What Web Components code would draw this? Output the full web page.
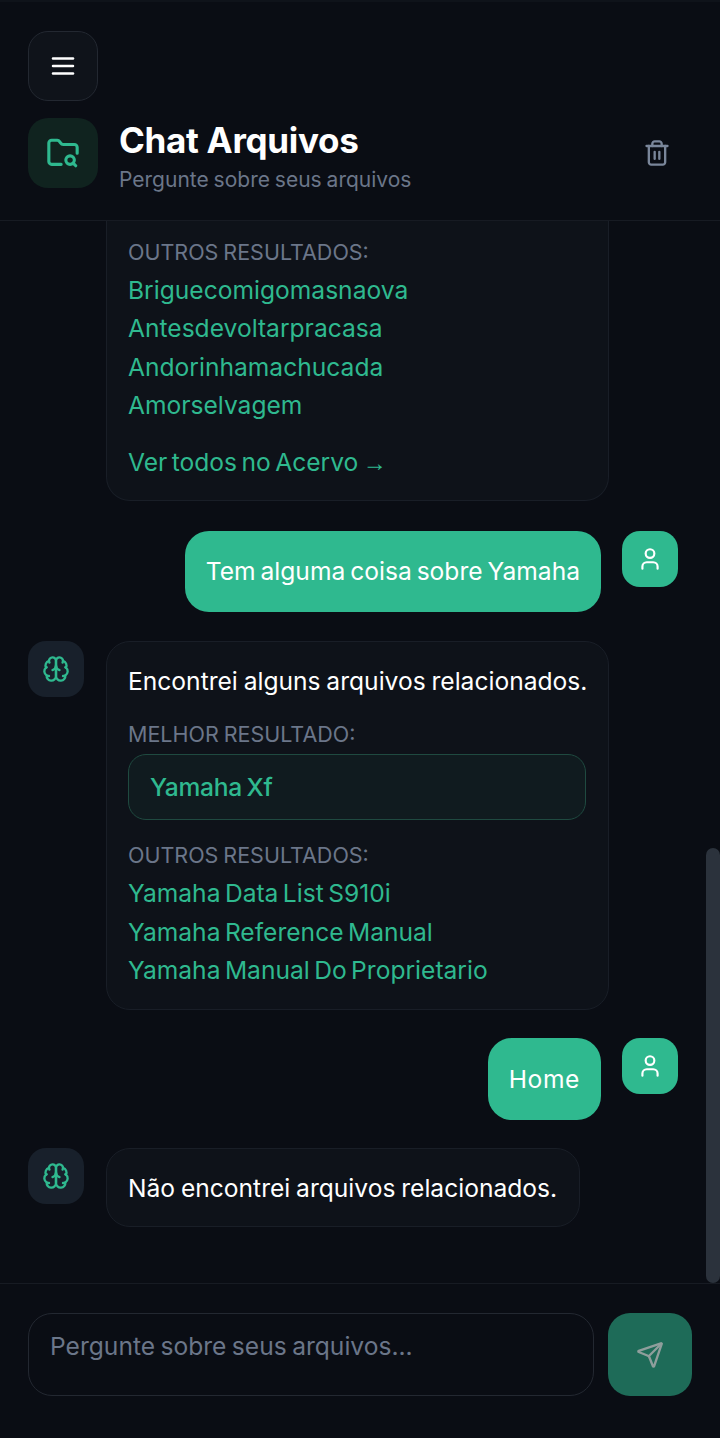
<!DOCTYPE html>
<html lang="pt-BR">
<head>
<meta charset="utf-8">
<title>Chat Arquivos</title>
<style>
  html, body { margin: 0; padding: 0; height: 100%; background: #0a0d14; }
  body { font-family: Inter, "Noto Sans", sans-serif; color: #fff; }
</style>
</head>
<body>
<chat-app>
  <app-header slot="header"></app-header>
  <chat-message role="bot" slot="messages" tall>
    <result-label>OUTROS RESULTADOS:</result-label>
    <result-link>Briguecomigomasnaova</result-link>
    <result-link>Antesdevoltarpracasa</result-link>
    <result-link>Andorinhamachucada</result-link>
    <result-link>Amorselvagem</result-link>
    <result-link more>Ver todos no Acervo <span style="font-family: 'Liberation Sans', sans-serif; font-size: 24px">→</span></result-link>
  </chat-message>
  <chat-message role="user" slot="messages">Tem alguma coisa sobre Yamaha</chat-message>
  <chat-message role="bot" slot="messages" wide>
    Encontrei alguns arquivos relacionados.
    <result-label gap>MELHOR RESULTADO:</result-label>
    <best-result>Yamaha Xf</best-result>
    <result-label>OUTROS RESULTADOS:</result-label>
    <result-link>Yamaha Data List S910i</result-link>
    <result-link>Yamaha Reference Manual</result-link>
    <result-link>Yamaha Manual Do Proprietario</result-link>
  </chat-message>
  <chat-message role="user" slot="messages" style="letter-spacing: 0.6px">Home</chat-message>
  <chat-message role="bot" slot="messages">Não encontrei arquivos relacionados.</chat-message>
  <chat-composer slot="footer"></chat-composer>
</chat-app>

<script>
const ICONS = {
  menu: '<path d="M4 6h16"/><path d="M4 12h16"/><path d="M4 18h16"/>',
  folder: '<path d="M10.7 20H4a2 2 0 0 1-2-2V5a2 2 0 0 1 2-2h3.9a2 2 0 0 1 1.69.9l.81 1.2a2 2 0 0 0 1.67.9H20a2 2 0 0 1 2 2v4.1"/><path d="m21 21-1.9-1.9"/><circle cx="17" cy="17" r="3"/>',
  trash: '<path d="M3 6h18"/><path d="M19 6v14c0 1-1 2-2 2H7c-1 0-2-1-2-2V6"/><path d="M8 6V4c0-1 1-2 2-2h4c1 0 2 1 2 2v2"/><path d="M10 11v6"/><path d="M14 11v6"/>',
  user: '<path d="M19 21v-2a4 4 0 0 0-4-4H9a4 4 0 0 0-4 4v2"/><circle cx="12" cy="7" r="4"/>',
  brain: '<path d="M12 5a3 3 0 1 0-5.997.125 4 4 0 0 0-2.526 5.77 4 4 0 0 0 .556 6.588A4 4 0 1 0 12 18Z"/><path d="M12 5a3 3 0 1 1 5.997.125 4 4 0 0 1 2.526 5.77 4 4 0 0 1-.556 6.588A4 4 0 1 1 12 18Z"/><path d="M15 13a4.5 4.5 0 0 1-3-4 4.5 4.5 0 0 1-3 4"/><path d="M17.599 6.5a3 3 0 0 0 .399-1.375"/><path d="M6.003 5.125A3 3 0 0 0 6.401 6.5"/><path d="M3.477 10.896a4 4 0 0 1 .585-.396"/><path d="M19.938 10.5a4 4 0 0 1 .585.396"/><path d="M6 18a4 4 0 0 1-1.967-.516"/><path d="M19.967 17.484A4 4 0 0 1 18 18"/>',
  send: '<path d="M14.536 21.686a.5.5 0 0 0 .937-.024l6.5-19a.496.496 0 0 0-.635-.635l-19 6.5a.5.5 0 0 0-.024.937l7.93 3.18a2 2 0 0 1 1.112 1.11z"/><path d="m21.854 2.147-10.94 10.939"/>'
};

class UiIcon extends HTMLElement {
  connectedCallback() {
    const size = this.getAttribute('size') || 24;
    const shadow = this.shadowRoot || this.attachShadow({ mode: 'open' });
    shadow.innerHTML = `
      <style>
        :host { display: block; width: ${size}px; height: ${size}px; }
        svg { display: block; width: 100%; height: 100%; fill: none; stroke: currentColor; stroke-linecap: round; stroke-linejoin: round; }
      </style>
      <svg viewBox="0 0 24 24" stroke-width="${this.getAttribute('stroke') || 2}">${ICONS[this.getAttribute('name')]}</svg>
    `;
  }
}
customElements.define('ui-icon', UiIcon);

class ChatApp extends HTMLElement {
  constructor() {
    super();
    const shadow = this.attachShadow({ mode: 'open' });
    shadow.innerHTML = `
      <style>
        :host { display: flex; flex-direction: column; height: 1438px; position: relative; overflow: hidden; background: #0a0d14; }
        .messages {
          flex: 1 1 0; min-height: 0; overflow: hidden;
          display: flex; flex-direction: column; justify-content: flex-end; gap: 28.4px;
          padding: 0 42px 56px 28px;
        }
        /* barra de rolagem, fica por cima da lista */
        .scrollbar { position: absolute; right: 0; top: 848px; width: 14px; height: 435px; border-radius: 7px; background: #2b323c; }
      </style>
      <slot name="header"></slot>
      <div class="messages"><slot name="messages"></slot></div>
      <slot name="footer"></slot>
      <div class="scrollbar"></div>
    `;
  }
}
customElements.define('chat-app', ChatApp);

class AppHeader extends HTMLElement {
  constructor() {
    super();
    const shadow = this.attachShadow({ mode: 'open' });
    shadow.innerHTML = `
      <style>
        :host { display: block; flex: none; padding: 31px 28px 32px; border-bottom: 1px solid #171b23; background: #0a0d14; box-shadow: inset 0 2px 0 #0f131a; }
        .menu {
          width: 70px; height: 70px; box-sizing: border-box; border: 1px solid #232831; border-radius: 20px;
          background: #0f131a; color: #fff; display: flex; align-items: center; justify-content: center;
          margin-bottom: 17px;
        }
        .brand { display: flex; align-items: center; gap: 21px; height: 70px; }
        .logo { width: 70px; height: 70px; border-radius: 20px; background: #10231f; color: #2fb98f; display: flex; align-items: center; justify-content: center; flex: none; }
        .titles { flex: 1; min-width: 0; padding-top: 6px; }
        h1 { margin: 0 0 3px; font-size: 35px; line-height: 44px; font-weight: 700; color: #fff; letter-spacing: -0.3px; }
        p { margin: 0; font-size: 21px; line-height: 30px; color: #6b7689; word-spacing: -1px; }
        .trash { color: #7a869a; margin-right: 21px; }
      </style>
      <div class="menu"><ui-icon name="menu" size="30"></ui-icon></div>
      <div class="brand">
        <div class="logo"><ui-icon name="folder" size="34" stroke="2.2"></ui-icon></div>
        <div class="titles">
          <h1>Chat Arquivos</h1>
          <p>Pergunte sobre seus arquivos</p>
        </div>
        <ui-icon class="trash" name="trash" size="28"></ui-icon>
      </div>
    `;
  }
}
customElements.define('app-header', AppHeader);

class ChatMessage extends HTMLElement {
  constructor() {
    super();
    const isUser = this.getAttribute('role') === 'user';
    const shadow = this.attachShadow({ mode: 'open' });
    shadow.innerHTML = `
      <style>
        :host { display: flex; flex: none; gap: 22px; align-items: flex-start; }
        :host([role="user"]) { justify-content: flex-end; gap: 21px; }
        .avatar { width: 56px; height: 56px; border-radius: 18px; flex: none; display: flex; align-items: center; justify-content: center; background: #18202b; color: #2fb98f; }
        :host([role="user"]) .avatar { background: #2fb98f; color: #fff; }
        .bubble {
          box-sizing: border-box; font-size: 24.6px; line-height: 38.4px; word-spacing: -1.1px; color: #fff; white-space: nowrap;
          padding: 20px 22px 18.6px 21px; border: 1px solid #191e27; border-radius: 24px; background: #0e1219;
        }
        :host([wide]) .bubble, :host([tall]) .bubble { width: 503px; padding-bottom: 18.5px; }
        :host([wide]) .bubble { padding-bottom: 19.2px; }
        :host([role="user"]) .bubble { background: #2fb98f; border: 0; padding: 21.6px 21px; word-spacing: -2px; }
        :host([tall]) .avatar { display: none; }
        :host([tall]) { padding-left: 78px; margin-bottom: 1px; }
        :host([tall]) .bubble { border-top: 0; border-top-left-radius: 0; border-top-right-radius: 0; }
      </style>
      ${isUser ? '' : '<div class="avatar"><ui-icon name="brain" size="28"></ui-icon></div>'}
      <div class="bubble"><slot></slot></div>
      ${isUser ? '<div class="avatar"><ui-icon name="user" size="26"></ui-icon></div>' : ''}
    `;
  }
}
customElements.define('chat-message', ChatMessage);

class ResultLabel extends HTMLElement {
  constructor() {
    super();
    const shadow = this.attachShadow({ mode: 'open' });
    shadow.innerHTML = `
      <style>
        :host { display: block; font-size: 21.5px; line-height: 32px; color: #6b7689; margin-bottom: 3px; }
        :host([gap]) { margin-top: 18px; margin-bottom: 4px; }
      </style>
      <slot></slot>
    `;
  }
}
customElements.define('result-label', ResultLabel);

class ResultLink extends HTMLElement {
  constructor() {
    super();
    const shadow = this.attachShadow({ mode: 'open' });
    shadow.innerHTML = `
      <style>
        :host { display: block; font-size: 24.6px; line-height: 38.4px; word-spacing: -2.5px; color: #2fb98f; }
        :host([more]) { margin-top: 18px; }
      </style>
      <slot></slot>
    `;
  }
}
customElements.define('result-link', ResultLink);

class BestResult extends HTMLElement {
  constructor() {
    super();
    const shadow = this.attachShadow({ mode: 'open' });
    shadow.innerHTML = `
      <style>
        :host {
          display: block; box-sizing: border-box; height: 66px; margin-bottom: 19px; padding: 0 21px;
          border: 1px solid #1f4a40; border-radius: 18px; background: #101b1f;
          font-size: 24.6px; line-height: 64px; font-weight: 500; letter-spacing: -0.3px; word-spacing: -1.5px; color: #2fb98f;
        }
      </style>
      <slot></slot>
    `;
  }
}
customElements.define('best-result', BestResult);

class ChatComposer extends HTMLElement {
  constructor() {
    super();
    const shadow = this.attachShadow({ mode: 'open' });
    shadow.innerHTML = `
      <style>
        :host { display: flex; flex: none; box-sizing: border-box; height: 155px; gap: 14px; padding: 29px 28px 0; border-top: 1px solid #171b23; background: #0a0d14; }
        .input {
          box-sizing: border-box; flex: 1; height: 83px; padding: 13px 21px; border: 1px solid #232831; border-radius: 24px;
          font-size: 24.6px; line-height: 38px; word-spacing: -1.5px; color: #6b7689;
        }
        .send { width: 84px; height: 83px; flex: none; border-radius: 22px; background: #1e6b58; color: #8f9e9c; display: flex; align-items: center; justify-content: center; }
      </style>
      <div class="input">Pergunte sobre seus arquivos...</div>
      <div class="send"><ui-icon name="send" size="28"></ui-icon></div>
    `;
  }
}
customElements.define('chat-composer', ChatComposer);
</script>
</body>
</html>
